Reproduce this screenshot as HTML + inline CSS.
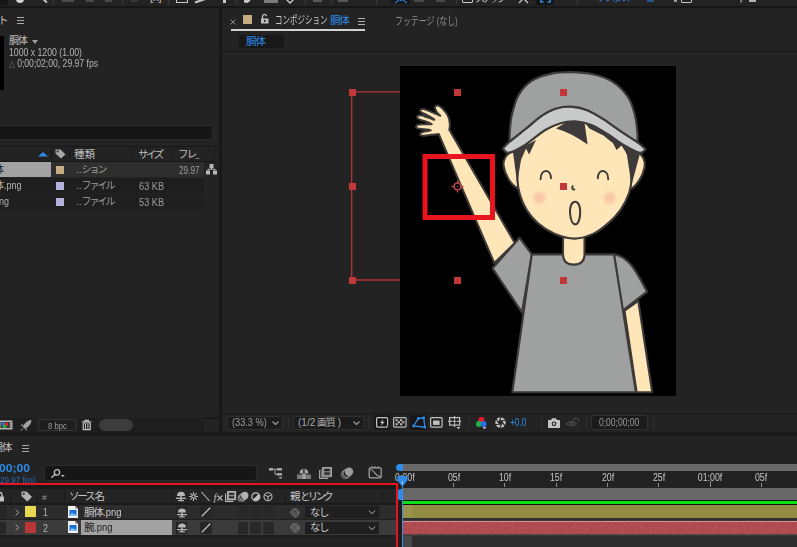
<!DOCTYPE html>
<html lang="ja">
<head>
<meta charset="utf-8">
<title>After Effects</title>
<style>
html,body{margin:0;padding:0;background:#232323;}
body{width:797px;height:547px;position:relative;overflow:hidden;font-family:"Liberation Sans","Noto Sans CJK JP",sans-serif;font-size:11px;color:#a8a8a8;}
.a{position:absolute;}
.t{position:absolute;white-space:nowrap;line-height:1;}
svg{position:absolute;overflow:visible;}
</style>
</head>
<body>
<!-- ===== top toolbar strip ===== -->
<div class="a" id="topbar" style="left:0;top:0;width:797px;height:6px;background:#232323;overflow:hidden;">
  <div class="a" style="left:0;top:0;width:8px;height:5px;background:#161616;"></div>
  <div class="a" style="left:16px;top:-5px;width:8px;height:8px;border-radius:4px;background:#d0d0d0;"></div>
  <svg style="left:41px;top:-3px;" width="8" height="7"><path d="M.8 1L6 5.5" stroke="#d0d0d0" stroke-width="1.8" fill="none"/></svg>
  <div class="a" style="left:53px;top:0;width:1px;height:5px;background:#383838;"></div>
  <div class="a" style="left:62px;top:0;width:12px;height:2px;background:#4a4a4a;"></div>
  <div class="a" style="left:86px;top:0;width:8px;height:2px;background:#484848;"></div>
  <div class="a" style="left:105px;top:0;width:7px;height:2px;background:#484848;"></div>
  <div class="a" style="left:122px;top:0;width:1px;height:5px;background:#383838;"></div>
  <div class="a" style="left:130px;top:-7px;width:9px;height:9px;border-radius:5px;border:1px solid #505050;box-sizing:border-box;"></div>
  <div class="t" style="left:150px;top:-8px;font-size:11px;color:#c0c0c0;">[x]</div>
  <div class="a" style="left:168px;top:0;width:1px;height:5px;background:#383838;"></div>
  <div class="a" style="left:175.5px;top:-5px;width:12.5px;height:8px;border:1.3px solid #c8c8c8;box-sizing:border-box;"></div>
  <svg style="left:195px;top:-1px;" width="15" height="5"><path d="M0 3.5L13 -1" stroke="#c8c8c8" stroke-width="2.2"/></svg>
  <div class="a" style="left:222.5px;top:0;width:3.5px;height:2.5px;background:#c8c8c8;"></div>
  <div class="a" style="left:236px;top:0;width:1px;height:5px;background:#383838;"></div>
  <div class="a" style="left:244px;top:-4px;width:7px;height:7px;border-radius:0 0 6px 2px;background:#c8c8c8;"></div>
  <div class="a" style="left:264px;top:0;width:14px;height:3px;background:#7a7a7a;"></div>
  <svg style="left:285px;top:-5px;" width="10" height="9"><path d="M1 4L5 8L9 4" stroke="#c8c8c8" stroke-width="1.4" fill="none"/></svg>
  <div class="a" style="left:304.5px;top:0;width:1px;height:5px;background:#383838;"></div>
  <div class="a" style="left:313px;top:0;width:9px;height:2px;background:#585858;"></div>
  <div class="a" style="left:331px;top:0;width:1px;height:5px;background:#383838;"></div>
  <div class="a" style="left:338px;top:0;width:10px;height:2px;background:#585858;"></div>
  <div class="a" style="left:375.5px;top:0;width:1px;height:5px;background:#383838;"></div>
  <div class="a" style="left:391px;top:0;width:19px;height:4px;background:#161616;border-radius:0 0 2px 2px;"></div>
  <svg style="left:394px;top:-4px;" width="14" height="8"><path d="M1 0L7 4.5L13 0M1 7L5 4M13 7L9 4" stroke="#2a78c8" stroke-width="1.3" fill="none"/></svg>
  <div class="a" style="left:414px;top:0;width:10px;height:2px;background:#484848;"></div>
  <div class="a" style="left:436px;top:0;width:9px;height:2px;background:#484848;"></div>
  <div class="a" style="left:455.5px;top:0;width:1px;height:5px;background:#383838;"></div>
  <div class="a" style="left:461.5px;top:-6px;width:11.5px;height:9px;border:1.4px solid #c8c8c8;box-sizing:border-box;border-radius:1px;"></div>
  <div class="t" style="left:475px;top:-7px;font-size:10.5px;color:#b8b8b8;letter-spacing:-3.5px;">スナップ</div>
  <svg style="left:518px;top:-5px;" width="11" height="9"><path d="M1 -1L10 8M10 -1L1 8" stroke="#c8c8c8" stroke-width="1.3"/></svg>
  <div class="a" style="left:536px;top:0;width:18px;height:4.5px;background:#151515;border-radius:0 0 2px 2px;"></div>
  <svg style="left:540px;top:-5px;" width="11" height="8"><path d="M3.5 7H.8V2M7.5 7H10.2V2" stroke="#2d8ceb" stroke-width="1.5" fill="none"/></svg>
  <div class="a" style="left:577px;top:0;width:1px;height:5px;background:#383838;"></div>
  <div class="t" style="left:597px;top:-8px;font-size:10.5px;color:#2d8ceb;letter-spacing:-3.6px;">デフォルト</div>
  <svg style="left:646.5px;top:-5px;" width="8" height="7"><path d="M0 .5H7M0 3.5H7M0 6H7" stroke="#2d8ceb" stroke-width="1.2" fill="none"/></svg>
  <div class="a" style="left:674px;top:-1px;width:3px;height:3px;background:#9a9a9a;"></div><div class="a" style="left:681px;top:-6px;width:11px;height:8.5px;border:1.4px solid #c4c4c4;box-sizing:border-box;border-radius:1px;"></div>
  <svg style="left:740px;top:-3px;" width="5" height="6"><path d="M.5 5.5L3.5 -1" stroke="#b0b0b0" stroke-width="1.2"/></svg><div class="a" style="left:749px;top:0;width:7px;height:2.2px;background:#b0b0b0;"></div>
</div>
<div class="a" style="left:0;top:6px;width:797px;height:2px;background:#161616;"></div>

<!-- ===== project panel ===== -->
<div class="a" id="project" style="left:0;top:8px;width:219px;height:424px;background:#232323;">
  <!-- panel tab -->
  <div class="t" style="left:-11.5px;top:7px;font-size:10.5px;color:#c0c0c0;letter-spacing:-1px;">クト</div>
  <svg style="left:17px;top:9px;" width="8" height="7"><path d="M0 .5H7M0 3.5H7M0 6.5H7" stroke="#a8a8a8" stroke-width="1" fill="none"/></svg>
  <!-- thumbnail -->
  <div class="a" style="left:0;top:28px;width:4px;height:54.4px;background:#000;"></div>
  <div class="t" style="left:9px;top:28px;font-size:10px;color:#c0c0c0;letter-spacing:-1px;">胴体</div>
  <svg style="left:32px;top:32px;" width="6" height="4"><path d="M0 0H6L3 4Z" fill="#a0a0a0"/></svg>
  <div class="t" style="left:9px;top:38.8px;font-size:10.5px;color:#b4b4b4;transform:scaleX(.828);transform-origin:0 0;">1000 x 1200 (1.00)</div>
  <div class="t" style="left:9px;top:49.5px;font-size:10.5px;color:#b4b4b4;transform:scaleX(.82);transform-origin:0 0;"><span style="font-size:7px;">△</span> 0;00;02;00, 29.97 fps</div>
  <!-- search -->
  <div class="a" style="left:-2px;top:116.5px;width:215px;height:15px;background:#161616;border:1px solid #2c2c2c;border-radius:2px;box-sizing:border-box;"></div>
  <!-- header -->
  <div class="a" style="left:0;top:137.5px;width:218px;height:1px;background:#171717;"></div>
  <div class="a" style="left:0;top:153px;width:218px;height:1px;background:#171717;"></div>
  <svg style="left:38px;top:144px;" width="10" height="5"><path d="M0 4.5L5 0L10 4.5Z" fill="#2d8ceb"/></svg>
  <div class="a" style="left:51px;top:140px;width:1px;height:9px;margin-top:1px;background:#171717;"></div>
  <svg style="left:55px;top:141px;" width="12" height="10"><path d="M0.5 0.5H5.5L10.5 5.5L6 9.5L0.5 4.5Z" fill="#a8a8a8"/><circle cx="2.6" cy="2.6" r="1" fill="#232323"/></svg>
  <div class="a" style="left:69px;top:140px;width:1px;height:9px;margin-top:1px;background:#171717;"></div>
  <div class="t" style="left:74px;top:141px;font-size:10.5px;color:#c0c0c0;">種類</div>
  <div class="a" style="left:131.5px;top:140px;width:1px;height:9px;margin-top:1px;background:#171717;"></div>
  <div class="t" style="left:138px;top:141px;font-size:10.5px;color:#c0c0c0;letter-spacing:-2.5px;">サイズ</div>
  <div class="a" style="left:171.5px;top:140px;width:1px;height:9px;margin-top:1px;background:#171717;"></div>
  <div class="t" style="left:178px;top:141px;font-size:10.5px;color:#c0c0c0;letter-spacing:-1.8px;">フレ<span style="font-size:7px;position:relative;top:-1px;letter-spacing:0;">_</span></div>
  <div class="a" style="left:214px;top:140px;width:1px;height:9px;margin-top:1px;background:#171717;"></div>
  <!-- rows -->
  <div class="a" style="left:0;top:154px;width:204px;height:15px;background:#2e2e2e;"></div>
  <div class="a" style="left:0;top:154px;width:50.5px;height:14.5px;background:#a2a2a2;"></div>
  <div class="t" style="left:-6px;top:157px;font-size:10px;color:#1a1a1a;">体</div>
  <div class="a" style="left:56px;top:158px;width:8px;height:8px;background:#c7ad82;"></div>
  <div class="t" style="left:76px;top:157px;font-size:10px;color:#9c9c9c;letter-spacing:-2px;"><span style="letter-spacing:0">..</span>ション</div>
  <div class="t" style="left:178.5px;top:156.5px;font-size:10.5px;color:#9c9c9c;transform:scaleX(.78);transform-origin:0 0;">29.97</div>
  <svg style="left:205.5px;top:156px;" width="11" height="11"><path d="M3.5 0H7.5V4H3.5ZM0 6.5H4V10.5H0ZM7 6.5H11V10.5H7Z" fill="#b8b8b8"/><path d="M5.5 4V5.2M2 6.5V5.2H9V6.5" stroke="#b8b8b8" stroke-width="1" fill="none"/></svg>

  <div class="a" style="left:0;top:169.5px;width:204px;height:15px;background:#1e1e1e;"></div>
  <div class="t" style="left:-6px;top:173px;font-size:10px;color:#b4b4b4;">体<span style="display:inline-block;transform:scaleX(.9);transform-origin:0 0;">.png</span></div>
  <div class="a" style="left:56px;top:174px;width:8px;height:8px;background:#b3b3de;"></div>
  <div class="t" style="left:76px;top:173px;font-size:10px;color:#9c9c9c;letter-spacing:-2px;"><span style="letter-spacing:0">..</span>ファイル</div>
  <div class="t" style="left:139px;top:172.5px;font-size:10.5px;color:#9c9c9c;transform:scaleX(.88);transform-origin:0 0;">63 KB</div>

  <div class="a" style="left:0;top:185.5px;width:204px;height:15px;background:#1f1f1f;"></div>
  <div class="t" style="left:-6px;top:189px;font-size:10px;color:#b4b4b4;transform:scaleX(.9);transform-origin:0 0;">png</div>
  <div class="a" style="left:56px;top:190px;width:8px;height:8px;background:#b3b3de;"></div>
  <div class="t" style="left:76px;top:189px;font-size:10px;color:#9c9c9c;letter-spacing:-2px;"><span style="letter-spacing:0">..</span>ファイル</div>
  <div class="t" style="left:139px;top:188.5px;font-size:10.5px;color:#9c9c9c;transform:scaleX(.88);transform-origin:0 0;">53 KB</div>

  <!-- bottom bar -->
  <div class="a" style="left:204px;top:409px;width:14px;height:1.6px;background:#161616;"></div>
  <div class="a" style="left:0;top:409.5px;width:204px;height:14.5px;background:#1e1e1e;"></div>
  <svg style="left:-1px;top:412px;" width="14" height="10"><rect x="0" y=".5" width="13.5" height="9" fill="#b4b4b4"/><rect x="1.5" y="2" width="9.5" height="6" fill="#3a3a3a"/><circle cx="4.3" cy="4" r="1.9" fill="#2a6ee8"/><circle cx="7.3" cy="4.3" r="1.9" fill="#e8192c"/><circle cx="5.6" cy="6.3" r="1.9" fill="#1fb53a"/><path d="M12 2V3M12 4.5V5.5M12 7V8" stroke="#3a3a3a" stroke-width="1"/></svg>
  <svg style="left:19.5px;top:411.5px;" width="12" height="11"><path d="M11.5 0C7 .5 4 3.5 2.8 7.2L4.8 8.8C8.5 7.2 11.2 4.2 11.5 0Z" fill="#a4a4a4"/><path d="M3.3 4.2L.3 5L2.3 6.6ZM7 8.2L6.6 11L5.2 9.2Z" fill="#a4a4a4"/><path d="M2.6 8.6L1 10.6" stroke="#a4a4a4" stroke-width="1"/></svg>
  <div class="a" style="left:37.5px;top:411px;width:39px;height:12px;border:1px solid #363636;background:#1e1e1e;box-sizing:border-box;border-radius:2px;"></div>
  <div class="t" style="left:47.5px;top:413.5px;font-size:8.5px;color:#9c9c9c;transform:scaleX(.9);transform-origin:0 0;">8 bpc</div>
  <svg style="left:82px;top:411.5px;" width="10" height="10"><path d="M0 1.8H9.4M3 1.5V.4H6.4V1.5" stroke="#c4c4c4" stroke-width="1.1" fill="none"/><path d="M1.2 3H8.2V9.6H1.2Z" fill="none" stroke="#c4c4c4" stroke-width="1.2"/><path d="M3.5 4V8.8M5.9 4V8.8" stroke="#c4c4c4" stroke-width="1"/></svg>
  <div class="a" style="left:98.5px;top:411px;width:34px;height:12px;background:#3c3c3c;border-radius:6px;"></div>
</div>
<!-- vertical divider -->
<div class="a" style="left:219px;top:8px;width:3px;height:428px;background:#191919;"></div>

<!-- ===== comp panel ===== -->
<div class="a" id="comp" style="left:222px;top:8px;width:575px;height:425px;background:#232323;">
  <!-- tab -->
  <svg style="left:8px;top:11px;" width="6" height="6"><path d="M.5 .5L5.5 5.5M5.5 .5L.5 5.5" stroke="#8a8a8a" stroke-width="1" fill="none"/></svg>
  <div class="a" style="left:21px;top:7px;width:9px;height:9px;background:#c7ad82;"></div>
  <svg style="left:39px;top:6px;" width="8" height="10"><path d="M1.5 5V2.6A2 2 0 0 1 5.5 2.3" stroke="#c0c0c0" stroke-width="1.3" fill="none"/><rect x="0" y="4.5" width="7.5" height="5" fill="#c0c0c0"/><rect x="3" y="6" width="1.5" height="2" fill="#232323"/></svg>
  <div class="t n" style="left:53px;top:7px;font-size:11px;color:#c8c8c8;transform:scaleX(.68);transform-origin:0 0;">コンポジション</div>
  <div class="t" style="left:108px;top:7px;font-size:10.5px;color:#2d8ceb;letter-spacing:-1px;">胴体</div>
  <svg style="left:136px;top:10px;" width="8" height="7"><path d="M0 .5H7M0 3.5H7M0 6.5H7" stroke="#b0b0b0" stroke-width="1" fill="none"/></svg>
  <div class="a" style="left:9px;top:21px;width:134px;height:2px;background:#d2d2d2;"></div>
  <div class="t" style="left:173px;top:8px;font-size:11px;color:#8c8c8c;transform:scaleX(.72);transform-origin:0 0;">フッテージ (なし)</div>
  <!-- sub tab -->
  <div class="a" style="left:17px;top:27px;width:45px;height:13px;background:#181818;border-radius:2px;"></div>
  <div class="t" style="left:24px;top:28px;font-size:10.5px;color:#2d8ceb;letter-spacing:-1px;">胴体</div>
  <div class="a" style="left:0;top:43px;width:575px;height:1px;background:#171717;"></div>
  <!-- viewer toolbar -->
  <div class="a" style="left:0;top:404.5px;width:575px;height:1px;background:#171717;"></div>
</div>

<!-- ===== viewer artwork (page coords) ===== -->
<svg id="viewer" style="left:0;top:0;" width="797" height="547" viewBox="0 0 797 547">
  <rect x="400" y="66" width="276" height="330" fill="#000"/>
  <g id="char">
<path d="M449.3 129.7C449.4 128.9 449.9 126.8 449.9 125.2C449.9 123.6 449.6 121.7 449.3 120.1C448.9 118.6 448.5 117.1 447.7 115.6C447.0 114.1 446.1 112.7 444.7 111.1C443.4 109.5 441.0 107.2 439.7 106.3C438.4 105.3 437.8 105.3 437.0 105.4C436.2 105.5 435.2 106.1 435.0 106.9C434.8 107.7 435.3 109.1 435.7 110.1C436.1 111.1 436.6 111.9 437.4 112.9C438.1 113.9 440.7 115.8 440.2 115.8C439.7 115.9 436.2 114.0 434.2 113.1C432.2 112.2 430.0 111.3 428.1 110.6C426.3 109.9 424.4 109.0 423.1 108.9C421.8 108.8 420.6 109.3 420.3 109.9C420.0 110.5 420.2 111.4 421.3 112.3C422.4 113.2 424.9 113.9 427.1 115.1C429.3 116.3 434.2 119.2 434.4 119.6C434.5 120.1 430.2 118.3 428.1 117.6C426.1 117.0 423.8 115.9 422.1 115.6C420.4 115.3 418.6 115.3 417.8 115.7C417.0 116.1 416.9 117.3 417.3 117.9C417.7 118.6 418.6 119.0 420.1 119.6C421.6 120.3 424.2 120.9 426.1 121.7C428.1 122.4 431.9 123.7 431.8 124.2C431.6 124.6 427.2 124.1 425.1 124.2C423.0 124.2 420.5 124.1 419.1 124.4C417.6 124.6 416.8 125.2 416.4 125.8C416.0 126.3 416.2 127.3 416.7 127.8C417.1 128.3 417.7 128.5 419.1 128.7C420.5 128.9 423.2 128.9 425.1 129.2C427.1 129.4 430.6 129.9 430.7 130.2C430.9 130.5 427.6 130.9 426.1 131.2C424.7 131.5 423.1 131.8 422.1 132.2C421.1 132.6 420.2 133.3 420.0 133.8C419.8 134.4 420.1 135.1 420.9 135.4C421.7 135.7 422.9 135.8 424.6 135.7C426.3 135.6 428.8 135.1 431.1 134.8C433.5 134.5 437.4 134.1 438.7 133.9L494.3 263L514.8 243Z" fill="#fee6b9" stroke="#3e3a39" stroke-width="2" stroke-linejoin="round"/>
<path d="M624.5 310.7L638.3 301L652.2 392.2H636.6Z" fill="#fee6b9" stroke="#3e3a39" stroke-width="2.1" stroke-linejoin="round"/>
<path d="M519.6 237.8L531.8 254.4L522 312.4L492.6 268.3Z" fill="#9fa0a0" stroke="#3e3a39" stroke-width="2.1" stroke-linejoin="round"/>
<path d="M614 254.4C620 255.3 626 259 631 264.8C635 269.5 638.5 275.5 647 291.6L622.7 310.7Z" fill="#9fa0a0" stroke="#3e3a39" stroke-width="2.1" stroke-linejoin="round"/>
<path d="M531.8 254.4H614L635.9 392.2H512.3Z" fill="#9fa0a0" stroke="#3e3a39" stroke-width="2.1" stroke-linejoin="round"/>
<path d="M563 230V254.5Q563 264.6 573.75 264.6Q584.5 264.6 584.5 254.5V230Z" fill="#fee6b9" stroke="#3e3a39" stroke-width="2.1"/>
<path d="M512.0 152.0C509.2 152.9 506.8 155.0 505.4 157.3C504.0 159.6 503.1 162.3 503.6 166.0C504.1 169.7 506.3 175.5 508.6 179.2C510.9 182.9 515.2 186.9 517.4 188.0C519.6 189.1 521.2 192.0 522.0 186.0C522.8 180.0 523.7 157.7 522.0 152.0C520.3 146.3 514.8 151.1 512.0 152.0Z" fill="#fee6b9" stroke="#3e3a39" stroke-width="2.1"/>
<path d="M637.0 152.0C639.9 153.1 642.2 155.9 643.5 158.4C644.8 160.9 645.3 163.5 644.6 167.2C643.9 170.8 641.6 176.7 639.2 180.3C636.8 184.0 632.6 188.2 630.4 189.1C628.2 190.0 626.7 192.2 626.0 186.0C625.3 179.8 624.2 157.7 626.0 152.0C627.8 146.3 634.1 150.9 637.0 152.0Z" fill="#fee6b9" stroke="#3e3a39" stroke-width="2.1"/>
<path d="M574.5 122.0C563.0 122.0 548.6 123.2 540.0 128.0C531.4 132.8 526.5 144.7 522.9 150.7C519.3 156.7 519.4 159.2 518.5 163.9C517.6 168.7 517.2 174.1 517.4 179.2C517.6 184.3 518.4 189.5 519.9 194.6C521.4 199.7 523.6 205.2 526.6 209.9C529.6 214.7 533.1 219.1 537.8 223.1C542.4 227.1 548.4 231.2 554.5 233.8C560.6 236.4 567.9 238.6 574.4 238.6C580.9 238.6 587.9 236.2 593.6 233.6C599.3 231.0 603.9 227.0 608.4 223.1C612.9 219.2 617.0 215.0 620.5 209.9C624.0 204.8 627.5 197.9 629.3 192.4C631.1 186.9 631.5 182.5 631.5 177.0C631.5 171.5 630.2 163.9 629.3 159.5C628.4 155.1 629.4 155.9 626.0 150.7C622.6 145.4 617.6 132.8 609.0 128.0C600.4 123.2 586.0 122.0 574.5 122.0Z" fill="#fee6b9" stroke="#3e3a39" stroke-width="2.1"/>
<path d="M556 128.4L573 118L584.6 123L587.6 144.6Q571 132.5 556 128.4Z" fill="#3e3a39"/>
<path d="M584 122L600 128L618 139L640 153.5L631.5 185L626.5 152L621.5 145.5L616.6 150L613 143.2L603.4 135.5L589.4 128.6Z" fill="#3e3a39"/>
<path d="M513 152L536 140L529.1 154.5L526 148.5L521 160L517.1 183Z" fill="#3e3a39"/>
<path d="M645.6 149.3C644.3 148.1 642.0 145.5 637.6 142.3C633.2 139.1 625.2 134.2 619.5 130.3C613.8 126.5 608.8 122.6 603.4 119.2C598.0 115.8 592.8 112.3 587.4 110.2C582.0 108.1 576.7 106.8 571.3 106.6C565.9 106.4 560.2 107.2 555.2 108.8C550.2 110.4 546.2 112.8 541.2 116.2C536.2 119.6 530.4 125.1 525.1 129.3C519.8 133.5 513.3 138.4 509.6 141.6C505.9 144.8 504.1 147.2 503.0 148.3C503.9 149.1 504.9 153.4 508.6 152.8C512.3 152.2 519.0 148.6 525.1 144.8C531.2 141.0 539.2 133.7 545.2 130.0C551.2 126.3 556.3 124.4 561.3 122.9C566.3 121.5 570.3 121.0 575.3 121.3C580.3 121.6 586.0 122.8 591.4 124.9C596.8 127.0 602.0 130.7 607.4 134.0C612.8 137.3 618.1 141.9 623.5 145.0C628.9 148.1 635.9 152.1 639.6 152.8C643.3 153.5 644.6 149.9 645.6 149.3Z" fill="#c9caca" stroke="#3e3a39" stroke-width="2.1" stroke-linejoin="round"/>
<path d="M509.6 141.6C509.6 140.1 509.3 136.9 509.7 132.4C510.1 127.9 510.4 121.0 511.9 114.8C513.4 108.6 515.2 100.8 518.5 95.1C521.8 89.4 526.2 84.4 531.7 80.8C537.2 77.2 544.8 75.0 551.4 73.6C558.0 72.1 564.2 72.0 571.2 72.1C578.2 72.2 586.2 72.7 593.1 74.3C600.0 75.9 606.9 78.1 612.8 81.9C618.6 85.7 624.5 91.8 628.2 97.3C631.9 102.8 633.3 108.9 634.8 114.8C636.3 120.7 636.9 127.8 637.4 132.4C637.9 137.0 637.6 140.7 637.6 142.3C634.6 140.3 625.2 134.2 619.5 130.3C613.8 126.5 608.8 122.6 603.4 119.2C598.0 115.8 592.8 112.3 587.4 110.2C582.0 108.1 576.7 106.8 571.3 106.6C565.9 106.4 560.2 107.2 555.2 108.8C550.2 110.4 546.2 112.8 541.2 116.2C536.2 119.6 530.4 125.1 525.1 129.3C519.8 133.5 512.2 139.6 509.6 141.6Z" fill="#9fa0a0" stroke="#3e3a39" stroke-width="2.1" stroke-linejoin="round"/>
<defs><radialGradient id="blush"><stop offset="0" stop-color="#f8c2a2"/><stop offset=".5" stop-color="#f9caa8" stop-opacity=".85"/><stop offset="1" stop-color="#fee6b9" stop-opacity="0"/></radialGradient></defs>
<circle cx="539.3" cy="197.8" r="9.5" fill="url(#blush)"/><circle cx="609.5" cy="197.8" r="9.5" fill="url(#blush)"/>
<path d="M540.6 179.2C540.6 168.5 551.2 168.5 551 178.2" fill="none" stroke="#3e3a39" stroke-width="1.9" stroke-linecap="round"/>
<path d="M597.8 178.2C597.6 168.5 608.2 168.5 608.2 179.2" fill="none" stroke="#3e3a39" stroke-width="1.9" stroke-linecap="round"/>
<path d="M572.6 186.2Q571.4 189.6 574.3 189.4" fill="none" stroke="#3e3a39" stroke-width="2" stroke-linecap="round"/>
<path d="M575.2 201.8C578.6 201.8 580.4 206.5 580.2 213C580 219.5 578 224.4 575.3 224.4C572.6 224.4 570.6 219.5 570 213C569.6 206.5 571.6 201.8 575.2 201.8Z" fill="#fee6b9" stroke="#3e3a39" stroke-width="2.1"/>
</g>
<g id="overlay">
<path d="M352 91.8H400M351.7 92V280M352 280H400" stroke="#b43436" stroke-width="1.3" fill="none"/>
<rect x="349" y="89" width="7" height="7" fill="#c2383a"/>
<rect x="454" y="89" width="7" height="7" fill="#c2383a"/>
<rect x="560" y="89" width="7" height="7" fill="#c2383a"/>
<rect x="349" y="183" width="7" height="7" fill="#c2383a"/>
<rect x="560" y="183" width="7" height="7" fill="#c2383a"/>
<rect x="349" y="277" width="7" height="7" fill="#c2383a"/>
<rect x="454" y="277" width="7" height="7" fill="#c2383a"/>
<rect x="560" y="277" width="7" height="7" fill="#c2383a"/>
<rect x="425" y="156.5" width="67.5" height="61" fill="none" stroke="#e8141e" stroke-width="5"/>
<g stroke="#c4484a" fill="none" stroke-width="1.4"><circle cx="457.5" cy="186.5" r="3.4"/><path d="M457.5 180.5V183.5M457.5 189.5V192.5M451.5 186.5H454.5M460.5 186.5H463.5"/></g><circle cx="457.5" cy="186.5" r="1.6" fill="#2a2a2a"/>
</g>
</svg>

<!-- ===== viewer toolbar (page coords) ===== -->
<div class="a" id="vtb" style="left:0;top:0;width:0;height:0;">
  <div class="a" style="left:227px;top:416px;width:56px;height:14px;background:#1b1b1b;border:1px solid #2f2f2f;border-radius:2px;box-sizing:border-box;"></div>
  <div class="t" style="left:232px;top:418px;font-size:10px;color:#9c9c9c;transform:scaleX(.92);transform-origin:0 0;">(33.3 %)</div>
  <svg style="left:272px;top:421px;" width="7" height="4"><path d="M.5 .5L3.5 3.5L6.5 .5" stroke="#a0a0a0" stroke-width="1.1" fill="none"/></svg>
  <div class="a" style="left:288px;top:417px;width:1px;height:12px;background:#2f2f2f;"></div>
  <div class="a" style="left:293px;top:416px;width:71px;height:14px;background:#1b1b1b;border:1px solid #2f2f2f;border-radius:2px;box-sizing:border-box;"></div>
  <div class="t" style="left:298px;top:418px;font-size:10px;color:#a8a8a8;">(1/2<span style="letter-spacing:-1px;"> 画質</span> )</div>
  <svg style="left:353px;top:421px;" width="7" height="4"><path d="M.5 .5L3.5 3.5L6.5 .5" stroke="#a0a0a0" stroke-width="1.1" fill="none"/></svg>
  <div class="a" style="left:368px;top:417px;width:1px;height:12px;background:#2f2f2f;"></div>
  <!-- fast preview -->
  <div class="a" style="left:374px;top:415px;width:16px;height:15px;background:#171717;border-radius:2px;"></div>
  <svg style="left:376px;top:417px;" width="13" height="12"><rect x=".6" y=".6" width="11" height="9.5" rx="1" fill="none" stroke="#c4c4c4" stroke-width="1.2"/><path d="M7.2 2L4 6H6L5 9L8.6 4.8H6.4Z" fill="#c4c4c4"/><path d="M8.5 9H12.5L10.5 11.5Z" fill="#c4c4c4" stroke="#171717" stroke-width=".5"/></svg>
  <!-- transparency grid -->
  <svg style="left:393px;top:417px;" width="14" height="11"><rect x=".6" y=".6" width="12.5" height="9.5" rx="1" fill="none" stroke="#b8b8b8" stroke-width="1.2"/><path d="M2.5 2.3h2.2v2h-2.2zM7 2.3h2.2v2h-2.2zM4.7 4.3h2.3v2h-2.3zM9.2 4.3h2.2v2h-2.2zM2.5 6.3h2.2v2h-2.2zM7 6.3h2.2v2h-2.2z" fill="#b8b8b8"/></svg>
  <!-- mask toggle -->
  <div class="a" style="left:410px;top:415px;width:17px;height:15px;background:#171717;border-radius:2px;"></div>
  <svg style="left:412px;top:417px;" width="14" height="12"><path d="M6.3 1.5L11.7 .8L12.9 10.2L1.6 9Z" fill="none" stroke="#2d8ceb" stroke-width="1.3"/><g fill="#2d8ceb"><rect x="5.1" y=".3" width="2.4" height="2.4"/><rect x="10.5" y="-.4" width="2.4" height="2.4"/><rect x="11.6" y="9" width="2.4" height="2.4"/><rect x=".4" y="7.8" width="2.4" height="2.4"/></g></svg>
  <!-- region of interest -->
  <svg style="left:430px;top:417px;" width="13" height="11"><rect x=".6" y=".6" width="11.5" height="9.5" rx="1" fill="none" stroke="#c0c0c0" stroke-width="1.2"/><rect x="3" y="3.5" width="6.6" height="4.4" fill="#c0c0c0"/></svg>
  <!-- guides -->
  <svg style="left:448px;top:416px;" width="14" height="14"><rect x="1.6" y="1.6" width="10" height="7.5" fill="none" stroke="#c0c0c0" stroke-width="1.2"/><path d="M6.6 0V11M0 5.3H13.2" stroke="#c0c0c0" stroke-width="1"/><rect x="4.5" y="3.5" width="4.2" height="3.6" fill="#232323"/><path d="M6.6 3.8V6.8M5 5.3H8.2" stroke="#c0c0c0" stroke-width="1"/><path d="M8.5 11H12.5L10.5 13.3Z" fill="#c0c0c0"/></svg>
  <div class="a" style="left:468px;top:417px;width:1px;height:12px;background:#2f2f2f;"></div>
  <!-- rgb -->
  <svg style="left:476px;top:417px;" width="12" height="13"><circle cx="5.4" cy="3" r="3" fill="#e8192c"/><circle cx="3" cy="7" r="3" fill="#1fb53a"/><circle cx="7.6" cy="7" r="3" fill="#2a6ee8"/><path d="M6.5 10H10.5L8.5 12.3Z" fill="#c0c0c0"/></svg>
  <!-- aperture -->
  <svg style="left:495px;top:417px;" width="11" height="11" viewBox="-5.5 -5.5 11 11"><circle r="5.2" fill="#c4c4c4"/><circle r="1.7" fill="#232323"/><g stroke="#232323" stroke-width="1.1" stroke-linecap="butt"><path d="M-1.6 -.6L.6 -5.2"/><path d="M-.3 -1.7L4.8 -2"/><path d="M1.3 -1.1L4.2 3.2"/><path d="M1.6 .6L-.6 5.2"/><path d="M.3 1.7L-4.8 2"/><path d="M-1.3 1.1L-4.2 -3.2"/></g></svg>
  <div class="t" style="left:510px;top:418px;font-size:10px;color:#2d8ceb;transform:scaleX(.83);transform-origin:0 0;">+0.0</div>
  <div class="a" style="left:541px;top:417px;width:1px;height:12px;background:#2f2f2f;"></div>
  <!-- camera -->
  <svg style="left:548px;top:418px;" width="12" height="10"><path d="M0 2H3L4 .3H8L9 2H12V10H0Z" fill="#c4c4c4"/><circle cx="6" cy="5.8" r="2.4" fill="#232323"/><circle cx="6" cy="5.8" r="1.2" fill="#c4c4c4"/></svg>
  <!-- show snapshot (dim) -->
  <svg style="left:566px;top:417px;" width="14" height="11"><path d="M.5 7Q5.5 2 10.5 7Q5.5 11 .5 7Z" fill="none" stroke="#4a4a4a" stroke-width="1.2"/><circle cx="5.5" cy="7" r="1.6" fill="#4a4a4a"/><path d="M7.5 3.5Q8 .8 10.5 1Q13 1.5 12.3 4.5" fill="none" stroke="#4a4a4a" stroke-width="1.2"/></svg>
  <div class="a" style="left:586px;top:417px;width:1px;height:12px;background:#2f2f2f;"></div>
  <div class="a" style="left:591px;top:415px;width:57px;height:15px;background:#1b1b1b;border:1px solid #303030;border-radius:2px;box-sizing:border-box;"></div>
  <div class="t" style="left:599px;top:418px;font-size:10px;color:#9c9c9c;transform:scaleX(.85);transform-origin:0 0;">0;00;00;00</div>
  <div class="a" style="left:653px;top:417px;width:1px;height:12px;background:#2f2f2f;"></div>
</div>

<!-- horizontal divider -->
<div class="a" style="left:0;top:431.5px;width:797px;height:4px;background:#191919;"></div>

<!-- ===== timeline panel ===== -->
<div class="a" id="timeline" style="left:0;top:436px;width:797px;height:111px;background:#232323;"></div>
<!-- timeline contents in page coords -->
<div class="a" id="tl" style="left:0;top:0;width:0;height:0;">
  <div class="t" style="left:-7.5px;top:442px;font-size:10.5px;color:#c0c0c0;letter-spacing:-1px;">胴体</div>
  <svg style="left:22px;top:445px;" width="8" height="7"><path d="M0 .5H7M0 3.5H7M0 6.5H7" stroke="#a8a8a8" stroke-width="1" fill="none"/></svg>
  <div class="t" style="left:-38px;top:462.5px;font-size:11.5px;font-weight:bold;color:#2d8ceb;transform:scaleX(1.05);transform-origin:100% 0;width:68px;text-align:right;">0;00;00;00</div>
  <div class="t" style="left:-44px;top:475.5px;font-size:9px;color:#2468b4;width:80px;text-align:right;transform:scaleX(.9);transform-origin:100% 0;">00000 (29.97 fps)</div>
  <!-- search -->
  <div class="a" style="left:44px;top:464.5px;width:212.5px;height:16px;background:#161616;border:1px solid #2c2c2c;border-radius:3px;box-sizing:border-box;"></div>
  <svg style="left:51px;top:468.5px;" width="16" height="11"><circle cx="6" cy="3.4" r="2.7" fill="none" stroke="#c0c0c0" stroke-width="1.3"/><path d="M4 5.5L.8 8.3" stroke="#c0c0c0" stroke-width="1.4" stroke-linecap="round"/><path d="M9.8 6H13.8L11.8 8Z" fill="#c0c0c0"/></svg>
  <!-- top-right icons -->
  <svg style="left:269px;top:467px;" width="14" height="12"><g fill="#a4a4a4"><rect x="0" y="1" width="4" height="2.6"/><rect x="8" y="1" width="5" height="2.6"/><rect x="8" y="6" width="5" height="2.6"/></g><path d="M4 2.3H8M6 2.3V7.3H8" stroke="#a4a4a4" stroke-width="1" fill="none"/><path d="M9.5 10H13.5L11.5 12Z" fill="#a4a4a4"/></svg>
  <svg style="left:297px;top:467px;" width="14" height="12"><path d="M2.5 6.5A4.5 4.8 0 0 1 11.5 6.5Z" fill="#a4a4a4"/><rect x="6.2" y="2" width="1.4" height="5" fill="#232323"/><rect x="0" y="7.5" width="14" height="4.5" fill="#7a7a7a"/><rect x="5.5" y="6.5" width="3" height="5.5" fill="#a4a4a4"/></svg>
  <svg style="left:319px;top:467px;" width="13" height="12"><rect x="3.6" y=".6" width="8.8" height="8.8" fill="#7a7a7a" stroke="#a4a4a4" stroke-width="1.2"/><rect x="5.5" y="2" width="5" height="2" fill="#232323"/><rect x="5.5" y="5.5" width="5" height="2" fill="#232323"/><path d="M.6 3V11.4H9" stroke="#a4a4a4" stroke-width="1.2" fill="none"/><path d="M2.2 2V10H10" stroke="#7a7a7a" stroke-width="1" fill="none"/></svg>
  <svg style="left:341px;top:467px;" width="13" height="12"><circle cx="4.5" cy="7.5" r="4" fill="none" stroke="#7a7a7a" stroke-width="1.2"/><circle cx="6" cy="6.3" r="4" fill="none" stroke="#8c8c8c" stroke-width="1.2"/><circle cx="8" cy="4.7" r="4.2" fill="#9c9c9c"/></svg>
  <svg style="left:368px;top:466px;" width="15" height="13"><rect x="1.2" y="1.8" width="12" height="10" rx="1" fill="none" stroke="#a4a4a4" stroke-width="1.2"/><path d="M2 3.5C7 3.5 6.5 10.5 12.5 10.5" stroke="#a4a4a4" stroke-width="1.2" fill="none"/><path d="M4 0V2M7 0V2M10 0V2" stroke="#a4a4a4" stroke-width="1"/></svg>

  <!-- header band -->
  <div class="a" style="left:0;top:485px;width:396px;height:4px;background:#1a1a1a;"></div>
  <div class="a" style="left:0;top:489px;width:396px;height:13.6px;background:#242424;"></div>
  <div class="a" style="left:0;top:502.6px;width:396px;height:2.2px;background:#1a1a1a;"></div>
  <!-- header content -->
  <svg style="left:-5px;top:491.5px;" width="9" height="10"><path d="M2 5V3A2.5 2.5 0 0 1 7 3V5" stroke="#c0c0c0" stroke-width="1.4" fill="none"/><rect x="0" y="4.5" width="9" height="5" rx=".8" fill="#c0c0c0"/></svg>
  <div class="a" style="left:10px;top:491px;width:1px;height:9px;margin-top:1px;background:#161616;"></div>
  <svg style="left:21px;top:491px;" width="12" height="11"><path d="M0.5 0.5H5.5L11 6L6.3 10.5L0.5 5Z" fill="#b4b4b4"/><circle cx="2.8" cy="2.8" r="1.1" fill="#262626"/></svg>
  <div class="a" style="left:37px;top:491px;width:1px;height:9px;margin-top:1px;background:#161616;"></div>
  <div class="t" style="left:42px;top:494px;font-size:8px;font-style:italic;color:#a0a0a0;">#</div>
  <div class="a" style="left:64px;top:491px;width:1px;height:9px;margin-top:1px;background:#161616;"></div>
  <div class="t" style="left:69px;top:491px;font-size:10.5px;color:#c4c4c4;letter-spacing:-2.2px;">ソース<span style="letter-spacing:0;margin-left:1px;">名</span></div>
  <div class="a" style="left:172px;top:491px;width:1px;height:9px;margin-top:1px;background:#161616;"></div>
  <div class="a" style="left:285px;top:491px;width:1px;height:9px;margin-top:1px;background:#161616;"></div>
  <div class="t" style="left:290px;top:491px;font-size:10.5px;color:#c4c4c4;letter-spacing:-2.8px;"><span style="letter-spacing:-.5px;">親</span>とリンク</div>
  <div class="a" style="left:382px;top:491px;width:1px;height:9px;margin-top:1px;background:#161616;"></div>
  <!-- header switch icons -->
  <svg style="left:176px;top:491px;" width="98" height="11">
    <g fill="#b8b8b8" stroke="none">
      <path d="M1 5A4 4.2 0 0 1 9 5Z"/><rect x="0" y="6.6" width="10" height="1.3"/><rect x="4.3" y="5" width="1.5" height="5"/><rect x="2" y="9" width="6" height="1.2"/>
    </g>
    <g stroke="#b8b8b8" stroke-width="1.1" fill="none">
      <path d="M17.5 1V10M13 5.5H22M14.3 2.3L20.7 8.7M20.7 2.3L14.3 8.7"/>
      <path d="M25.5 1L33.5 10"/>
    </g>
    <circle cx="17.5" cy="5.5" r="1.6" fill="#262626" stroke="#b8b8b8" stroke-width="1"/>
    <text x="37.5" y="9.5" font-size="11" font-style="italic" font-family="Liberation Serif, serif" fill="#b8b8b8">f</text>
    <path d="M41.5 4.5L46.5 9.5M46.5 4.5L41.5 9.5" stroke="#b8b8b8" stroke-width="1.1"/>
    <rect x="51.6" y=".6" width="8" height="8" fill="#8c8c8c" stroke="#b8b8b8" stroke-width="1.1"/><rect x="53" y="2" width="5" height="1.8" fill="#262626"/><rect x="53" y="5.3" width="5" height="1.8" fill="#262626"/><path d="M49.6 2.5V10.4H57.5" stroke="#b8b8b8" stroke-width="1.1" fill="none"/>
    <circle cx="65.5" cy="7" r="3.3" fill="none" stroke="#8c8c8c" stroke-width="1.1"/><circle cx="67" cy="5.8" r="3.3" fill="none" stroke="#a0a0a0" stroke-width="1.1"/><circle cx="68.8" cy="4.4" r="3.6" fill="#b0b0b0"/>
    <circle cx="79.8" cy="5.8" r="4" fill="#262626" stroke="#c0c0c0" stroke-width="1.2"/><path d="M77 8.6A4 4 0 0 0 82.6 3Z" fill="#c0c0c0"/>
    <circle cx="92" cy="5.8" r="4" fill="none" stroke="#b8b8b8" stroke-width="1.1"/><path d="M88.8 4L92 5.6L95.2 4M92 5.6V9.5" stroke="#b8b8b8" stroke-width="1" fill="none"/>
  </svg>

  <!-- rows -->
  <div class="a" style="left:0;top:504.8px;width:396px;height:14.2px;background:#2c2c2c;"></div>
  <div class="a" style="left:0;top:519px;width:396px;height:1.2px;background:#1e1e1e;"></div>
  <div class="a" style="left:0;top:520.2px;width:396px;height:14.8px;background:#3b3b3b;"></div>
  <div class="a" style="left:0;top:535px;width:396px;height:1.5px;background:#1c1c1c;"></div>
<div class="a" style="left:0;top:506px;width:6px;height:12px;background:#262626;"></div>
<svg style="left:15px;top:508.5px;" width="5" height="8"><path d="M.6 .6L3.8 3.5L.6 6.4" stroke="#a8a8a8" stroke-width="1" fill="none"/></svg>
<div class="a" style="left:25px;top:506px;width:11px;height:11px;background:#e8d852;"></div>
<div class="t" style="left:43px;top:507px;font-size:10.5px;color:#b4b4b4;transform:scaleX(.85);transform-origin:0 0;">1</div>
<svg style="left:68px;top:506px;" width="10" height="12"><path d="M0 0H7L10 3V12H0Z" fill="#f0f0f0"/><path d="M7 0V3H10Z" fill="#b0b0b0"/><rect x="1.5" y="4" width="7" height="6" fill="#1c6fd0"/><path d="M1.5 10L4 6.5L6 8.5L7 7.5L8.5 10Z" fill="#7cc4ff"/></svg>
<div class="t" style="left:84px;top:506.5px;font-size:10.5px;color:#c8c8c8;"><span style="letter-spacing:-1px;">胴体</span><span style="display:inline-block;transform:scaleX(.9);transform-origin:0 0;">.png</span></div>
<div class="a" style="left:176px;top:506px;width:11px;height:12px;background:#262626;"></div>
<svg style="left:176.5px;top:507.5px;" width="10" height="10"><g fill="#b8b8b8"><path d="M1 4.5A4 4 0 0 1 9 4.5Z"/><rect x="0" y="6" width="10" height="1.2"/><rect x="4.3" y="4.5" width="1.5" height="4.5"/><rect x="2" y="8.3" width="6" height="1.1"/></g></svg>
<div class="a" style="left:200px;top:506px;width:12px;height:12px;background:#262626;"></div>
<svg style="left:201px;top:507px;" width="10" height="10"><path d="M.7 9.3L9.3 .7" stroke="#d8d8d8" stroke-width="1.2"/></svg>
<div class="a" style="left:237.5px;top:506px;width:10.7px;height:12px;background:#282828;"></div>
<div class="a" style="left:250.2px;top:506px;width:10.7px;height:12px;background:#282828;"></div>
<div class="a" style="left:262.9px;top:506px;width:10.7px;height:12px;background:#282828;"></div>
<svg style="left:289px;top:506.5px;" width="11" height="11" viewBox="-5.5 -5.5 11 11"><path d="M0.57 -0.17L0.67 -0.05L0.73 0.12L0.75 0.30L0.71 0.50L0.60 0.69L0.44 0.87L0.22 1.00L-0.05 1.09L-0.35 1.11L-0.66 1.06L-0.96 0.93L-1.23 0.73L-1.45 0.45L-1.60 0.12L-1.65 -0.24L-1.61 -0.63L-1.46 -1.01L-1.20 -1.35L-0.85 -1.64L-0.42 -1.85L0.07 -1.96L0.59 -1.95L1.10 -1.82L1.59 -1.57L2.01 -1.21L2.33 -0.75L2.52 -0.22L2.58 0.35L2.48 0.94L2.22 1.50L1.82 2.00L1.29 2.41L0.65 2.69L-0.06 2.82L-0.80 2.79L-1.53 2.59L-2.20 2.23L-2.77 1.71L-3.19 1.07L-3.45 0.34L-3.51 -0.45L-3.36 -1.24L-3.00 -1.98L-2.45 -2.64L-1.74 -3.17L-0.89 -3.53L0.04 -3.69L1.00 -3.64L1.94 -3.37L2.80 -2.89L3.52 -2.22L4.06 -1.40L4.37 -0.47L4.43 0.52L4.24 1.51L3.79 2.45L3.10 3.27L2.20 3.92L1.15 4.36L0.00 4.56" stroke="#909090" stroke-width="1" fill="none" stroke-linecap="round"/></svg>
<div class="a" style="left:305px;top:506px;width:74px;height:12px;background:#1f1f1f;"></div>
<div class="t" style="left:310px;top:506.5px;font-size:10.5px;color:#c8c8c8;letter-spacing:-1.5px;">なし</div>
<svg style="left:368px;top:510px;" width="8" height="5"><path d="M.8 .6L4 3.7L7.2 .6" stroke="#b0b0b0" stroke-width="1" fill="none"/></svg>
<div class="a" style="left:0;top:521.5px;width:6px;height:12px;background:#262626;"></div>
<svg style="left:15px;top:524px;" width="5" height="8"><path d="M.6 .6L3.8 3.5L.6 6.4" stroke="#a8a8a8" stroke-width="1" fill="none"/></svg>
<div class="a" style="left:25px;top:522px;width:11px;height:11px;background:#b8383a;"></div>
<div class="t" style="left:43px;top:522.5px;font-size:10.5px;color:#b4b4b4;transform:scaleX(.85);transform-origin:0 0;">2</div>
<svg style="left:68px;top:521px;" width="10" height="12"><path d="M0 0H7L10 3V12H0Z" fill="#f0f0f0"/><path d="M7 0V3H10Z" fill="#b0b0b0"/><rect x="1.5" y="4" width="7" height="6" fill="#1c6fd0"/><path d="M1.5 10L4 6.5L6 8.5L7 7.5L8.5 10Z" fill="#7cc4ff"/></svg>
<div class="a" style="left:81px;top:520px;width:91px;height:15px;background:#a2a2a2;"></div>
<div class="t" style="left:84px;top:522px;font-size:10.5px;color:#1c1c1c;"><span style="letter-spacing:-1px;">腕</span><span style="display:inline-block;transform:scaleX(.9);transform-origin:0 0;">.png</span></div>
<div class="a" style="left:176px;top:521.5px;width:11px;height:12px;background:#262626;"></div>
<svg style="left:176.5px;top:523px;" width="10" height="10"><g fill="#b8b8b8"><path d="M1 4.5A4 4 0 0 1 9 4.5Z"/><rect x="0" y="6" width="10" height="1.2"/><rect x="4.3" y="4.5" width="1.5" height="4.5"/><rect x="2" y="8.3" width="6" height="1.1"/></g></svg>
<div class="a" style="left:200px;top:521.5px;width:12px;height:12px;background:#262626;"></div>
<svg style="left:201px;top:522.5px;" width="10" height="10"><path d="M.7 9.3L9.3 .7" stroke="#d8d8d8" stroke-width="1.2"/></svg>
<div class="a" style="left:237.5px;top:521.5px;width:10.7px;height:12px;background:#282828;"></div>
<div class="a" style="left:250.2px;top:521.5px;width:10.7px;height:12px;background:#282828;"></div>
<div class="a" style="left:262.9px;top:521.5px;width:10.7px;height:12px;background:#282828;"></div>
<svg style="left:289px;top:522px;" width="11" height="11" viewBox="-5.5 -5.5 11 11"><path d="M0.57 -0.17L0.67 -0.05L0.73 0.12L0.75 0.30L0.71 0.50L0.60 0.69L0.44 0.87L0.22 1.00L-0.05 1.09L-0.35 1.11L-0.66 1.06L-0.96 0.93L-1.23 0.73L-1.45 0.45L-1.60 0.12L-1.65 -0.24L-1.61 -0.63L-1.46 -1.01L-1.20 -1.35L-0.85 -1.64L-0.42 -1.85L0.07 -1.96L0.59 -1.95L1.10 -1.82L1.59 -1.57L2.01 -1.21L2.33 -0.75L2.52 -0.22L2.58 0.35L2.48 0.94L2.22 1.50L1.82 2.00L1.29 2.41L0.65 2.69L-0.06 2.82L-0.80 2.79L-1.53 2.59L-2.20 2.23L-2.77 1.71L-3.19 1.07L-3.45 0.34L-3.51 -0.45L-3.36 -1.24L-3.00 -1.98L-2.45 -2.64L-1.74 -3.17L-0.89 -3.53L0.04 -3.69L1.00 -3.64L1.94 -3.37L2.80 -2.89L3.52 -2.22L4.06 -1.40L4.37 -0.47L4.43 0.52L4.24 1.51L3.79 2.45L3.10 3.27L2.20 3.92L1.15 4.36L0.00 4.56" stroke="#909090" stroke-width="1" fill="none" stroke-linecap="round"/></svg>
<div class="a" style="left:305px;top:521.5px;width:74px;height:12px;background:#1f1f1f;"></div>
<div class="t" style="left:310px;top:522px;font-size:10.5px;color:#c8c8c8;letter-spacing:-1.5px;">なし</div>
<svg style="left:368px;top:525.5px;" width="8" height="5"><path d="M.8 .6L4 3.7L7.2 .6" stroke="#b0b0b0" stroke-width="1" fill="none"/></svg>
<div class="a" style="left:0;top:482.5px;width:397.5px;height:2px;background:#e6141e;"></div>
<div class="a" style="left:395.8px;top:482.5px;width:1.8px;height:70px;background:#e6141e;"></div>
<div class="a" style="left:398px;top:436px;width:399px;height:111px;background:#232323;"></div>
<div class="a" style="left:402px;top:464px;width:395px;height:6.5px;background:#686868;"></div>
<div class="a" style="left:396px;top:464px;width:7px;height:7px;background:#2d8ceb;border-radius:4px 0 0 4px;"></div>
<div class="a" style="left:398px;top:470.5px;width:399px;height:17px;background:#222222;"></div>
<div class="t" style="left:394.5px;top:472.5px;font-size:10px;color:#c4c4c4;transform:scaleX(.88);transform-origin:0 0;">0:00f</div>
<div class="a" style="left:453.0px;top:483.0px;width:1.2px;height:3.5px;background:#8c8c8c;"></div>
<div class="t" style="left:423.6px;top:472.5px;width:60px;text-align:center;font-size:10px;color:#c4c4c4;transform:scaleX(.88);">05f</div>
<div class="a" style="left:504.3px;top:483.0px;width:1.2px;height:3.5px;background:#8c8c8c;"></div>
<div class="t" style="left:474.9px;top:472.5px;width:60px;text-align:center;font-size:10px;color:#c4c4c4;transform:scaleX(.88);">10f</div>
<div class="a" style="left:555.6px;top:483.0px;width:1.2px;height:3.5px;background:#8c8c8c;"></div>
<div class="t" style="left:526.2px;top:472.5px;width:60px;text-align:center;font-size:10px;color:#c4c4c4;transform:scaleX(.88);">15f</div>
<div class="a" style="left:606.9px;top:483.0px;width:1.2px;height:3.5px;background:#8c8c8c;"></div>
<div class="t" style="left:577.5px;top:472.5px;width:60px;text-align:center;font-size:10px;color:#c4c4c4;transform:scaleX(.88);">20f</div>
<div class="a" style="left:658.2px;top:483.0px;width:1.2px;height:3.5px;background:#8c8c8c;"></div>
<div class="t" style="left:628.8px;top:472.5px;width:60px;text-align:center;font-size:10px;color:#c4c4c4;transform:scaleX(.88);">25f</div>
<div class="a" style="left:709.5px;top:481.0px;width:1.2px;height:5.5px;background:#8c8c8c;"></div>
<div class="t" style="left:680.1px;top:472.5px;width:60px;text-align:center;font-size:10px;color:#c4c4c4;transform:scaleX(.88);">01:00f</div>
<div class="a" style="left:760.8px;top:483.0px;width:1.2px;height:3.5px;background:#8c8c8c;"></div>
<div class="t" style="left:731.4px;top:472.5px;width:60px;text-align:center;font-size:10px;color:#c4c4c4;transform:scaleX(.88);">05f</div>
<div class="a" style="left:402px;top:488px;width:395px;height:12px;background:#676767;"></div>

<div class="a" style="left:402px;top:499.8px;width:395px;height:5.2px;background:#121212;"></div>
<div class="a" style="left:402px;top:501.2px;width:395px;height:2.6px;background:#08e018;"></div>
<div class="a" style="left:398px;top:505px;width:399px;height:15px;background:#2e2e2e;"></div>
<div class="a" style="left:398px;top:520px;width:399px;height:15.5px;background:#3a3a3a;"></div>
<div class="a" style="left:398px;top:535.5px;width:399px;height:11.5px;background:#2d2d2d;"></div>
<div class="a" style="left:403px;top:536px;width:9px;height:11px;background:#474747;"></div>
<div class="a" style="left:403px;top:505.3px;width:394px;height:13px;background:#928b43;"></div>
<div class="a" style="left:403px;top:505.3px;width:9px;height:13px;background:#9b934c;"></div>
<svg style="left:403px;top:520.8px;" width="394" height="13.2"><filter id="nz" x="0" y="0" width="100%" height="100%"><feTurbulence type="fractalNoise" baseFrequency=".9" numOctaves="2" seed="3"/><feColorMatrix values="0 0 0 0 .75  0 0 0 0 .35  0 0 0 0 .36  .35 .35 0 0 -.26"/></filter><rect width="394" height="13.2" fill="#ab4448"/><rect width="394" height="13.2" filter="url(#nz)"/><rect width="394" height=".9" fill="#d49a9c"/></svg>
<div class="a" style="left:397.6px;top:487.7px;width:4.4px;height:60px;background:#1d1d1d;"></div>
<div class="a" style="left:398.2px;top:488.6px;width:3.4px;height:11px;background:#2d8ceb;border-radius:2px 0 0 2px;"></div>
<div class="a" style="left:401.6px;top:478px;width:1.4px;height:69px;background:#3a8ee6;"></div>
<svg style="left:397px;top:476px;" width="11" height="11"><path d="M.3 0H10.3V4.5L5.3 10.8L.3 4.5Z" fill="#2d8ceb"/><path d="M5.3 5V8.5" stroke="#bcd8f4" stroke-width=".9"/></svg>
</div>
</body>
</html>
